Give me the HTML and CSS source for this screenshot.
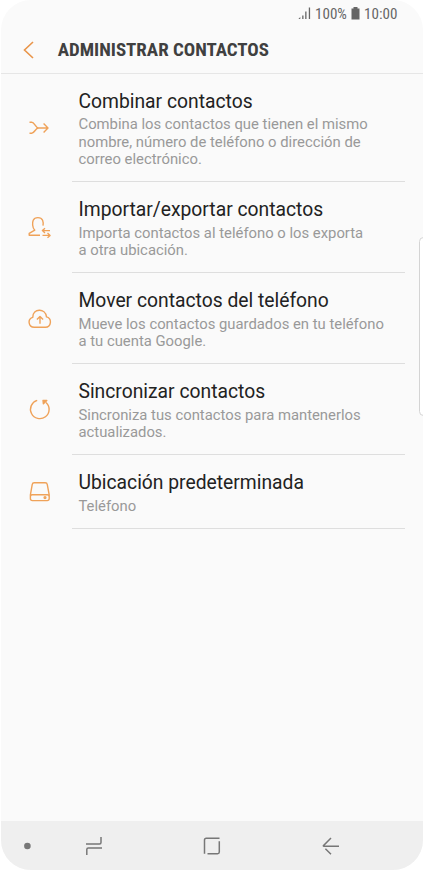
FILE: index.html
```html
<!DOCTYPE html>
<html lang="es">
<head>
    <meta charset="utf-8">
    <title>Administrar contactos</title>
    <link rel="stylesheet" href="styles.css">
</head>
<body>
    <div class="screen">
        <div class="status-bar">
            <svg class="signal" width="13" height="13" viewBox="0 0 13 13">
                <path d="M.4 12 2.3 10.1V12ZM4.2 8.4H5.5V12H4.2ZM7.2 4.5H8.5V12H7.2ZM10.8.5H12.1V12H10.8Z"/>
            </svg>
            <span class="battery-level">100%</span>
            <svg class="battery" width="9" height="13" viewBox="0 0 9 13">
                <path d="M2.5 0h4v1.5H8.5V12.5H.5V1.5h2Z"/>
            </svg>
            <span class="clock">10:00</span>
        </div>

        <div class="header">
            <svg class="back" width="12" height="18" viewBox="0 0 12 18">
                <path d="M10 1 1.5 9 10 17"/>
            </svg>
            <h1>ADMINISTRAR CONTACTOS</h1>
        </div>

        <div class="list">
            <div class="item">
                <svg class="icon" width="24" height="24" viewBox="0 0 24 24">
                    <path d="M1.5 6.2H3.7C6.8 6.2 7.1 12 10.7 12H19.8M1.5 17.2H3.7C6.8 17.2 7.1 12 10.7 12M15.6 7.6 20 12 15.6 16.4"/>
                </svg>
                <div class="item-text">
                    <h2>Combinar contactos</h2>
                    <p>Combina los contactos que tienen el mismo<br>nombre, número de teléfono o dirección de<br>correo electrónico.</p>
                </div>
            </div>
            <div class="item">
                <svg class="icon" width="24" height="24" viewBox="0 0 24 24">
                    <path d="M12 19.2H1.2V17.4L6.8 14.2C4 11.6 4.4 6.2 5.2 4.3C6.8.7 13 .7 14.6 4.3C15.3 6 15.3 7.6 15 9.6M22 14.6H14.5M17 12.3 14.4 14.6 17 16.9M14.5 19.4H22M19.5 17.1 22.1 19.4 19.5 21.7"/>
                </svg>
                <div class="item-text">
                    <h2>Importar/exportar contactos</h2>
                    <p>Importa contactos al teléfono o los exporta<br>a otra ubicación.</p>
                </div>
            </div>
            <div class="item">
                <svg class="icon" width="24" height="24" viewBox="0 0 24 24">
                    <path d="M6.2 20.3A5.1 5.1 0 0 1 4.8 10.3C4.7 1.2 17.5.6 18.5 9.9A5.3 5.3 0 0 1 17.4 20.3ZM12 16.8V9.8M8.9 12.6 12 9.5 15.1 12.6"/>
                </svg>
                <div class="item-text">
                    <h2>Mover contactos del teléfono</h2>
                    <p>Mueve los contactos guardados en tu teléfono<br>a tu cuenta Google.</p>
                </div>
            </div>
            <div class="item">
                <svg class="icon" width="24" height="24" viewBox="0 0 24 24">
                    <path d="M9.2 2.4A9.3 9.3 0 1 0 18 4.4"/>
                    <path class="filled" d="M15 2.4H18.8L15.4 5.8Z"/>
                </svg>
                <div class="item-text">
                    <h2>Sincronizar contactos</h2>
                    <p>Sincroniza tus contactos para mantenerlos<br>actualizados.</p>
                </div>
            </div>
            <div class="item">
                <svg class="icon" width="24" height="24" viewBox="0 0 24 24">
                    <path d="M6.2 2.8H17.2Q19 2.8 19.3 4.6L21.2 14.8V18.6Q21.2 20.6 19.2 20.6H4.4Q2.4 20.6 2.4 18.6V14.8L4.2 4.6Q4.5 2.8 6.2 2.8ZM2.4 16.8Q2.4 14.7 4.4 14.7H19.2Q21.2 14.7 21.2 16.8"/>
                    <circle cx="17" cy="17.6" r=".9"/>
                </svg>
                <div class="item-text">
                    <h2>Ubicación predeterminada</h2>
                    <p>Teléfono</p>
                </div>
            </div>
        </div>

        <div class="nav-bar">
            <svg width="8" height="8" viewBox="0 0 8 8">
                <circle class="dot" cx="4.4" cy="4" r="3.3"/>
            </svg>
            <svg width="18" height="20" viewBox="0 0 18 20">
                <path d="M1 8H14.5Q16 8 16 6.5V1M1.8 19V13.5Q1.8 12 3.3 12H17"/>
            </svg>
            <svg width="18" height="18" viewBox="0 0 18 18">
                <path d="M1.5 16.7V3Q1.5 1.3 3.2 1.3H16.5M16.3 4.3V15Q16.3 16.7 14.6 16.7H4.5"/>
            </svg>
            <svg width="18" height="18" viewBox="0 0 18 18">
                <path d="M9 1 1.4 8.6Q1.2 9.2 1.8 9.2H17M3.4 11.8 9 17.2"/>
            </svg>
        </div>

        <div class="edge-handle"></div>
    </div>
</body>
</html>
```
FILE: styles.css
```css
body {
    margin: 0;
    background: #fff;
    font-family: Roboto, sans-serif;
}
.screen {
    position: relative;
    display: flex;
    flex-direction: column;
    width: 422px;
    height: 870px;
    margin-left: 1px;
    overflow: hidden;
    background: #fafafa;
    border-radius: 30px;
}
svg {
    display: block;
    flex: none;
    fill: none;
}
.status-bar {
    display: flex;
    align-items: center;
    height: 27px;
    padding-left: 297px;
    color: #666;
    font-size: 15.1px;
    font-stretch: 75%;
}
.signal,
.battery {
    fill: #666;
}
.battery-level {
    width: 32px;
    margin: 0 4px;
}
.clock {
    margin-left: 4px;
}
.header {
    display: flex;
    align-items: center;
    box-sizing: border-box;
    height: 47px;
    padding-left: 21.5px;
    border-bottom: 1px solid #e6e6e6;
}
.back {
    stroke: #e9954a;
    stroke-width: 1.6;
}
.header h1 {
    margin: 0 0 0 23.2px;
    color: #404040;
    font-size: 18.95px;
    font-weight: 700;
    font-stretch: 75%;
    line-height: 22px;
    white-space: nowrap;
}
.list {
    flex: 1;
}
.item {
    display: flex;
    align-items: center;
    padding: 0 18px 0 26.6px;
}
.icon {
    margin-right: 20.4px;
    stroke: #efa259;
    stroke-width: 1.4;
    stroke-linejoin: round;
}
.filled {
    fill: #efa259;
}
.item-text {
    flex: 1;
    padding: 16px 0 12.8px 6.5px;
    border-bottom: 1px solid #dedede;
}
.item h2 {
    margin: 0 0 2.4px;
    color: #222;
    font-size: 19.3px;
    font-weight: 400;
    line-height: 24px;
}
.item p {
    margin: 0;
    color: #999;
    font-size: 14.83px;
    line-height: 17.4px;
    white-space: nowrap;
}
.nav-bar {
    display: flex;
    align-items: center;
    height: 49px;
    padding-left: 22.3px;
    background: #efefef;
    stroke: #777;
    stroke-width: 1.5;
}
.nav-bar svg:nth-child(2) {
    margin-left: 53.4px;
}
.nav-bar svg:nth-child(3) {
    margin-left: 100px;
}
.nav-bar svg:nth-child(4) {
    margin-left: 101px;
}
.dot {
    fill: #777;
    stroke: none;
}
/* edge panel handle, peeks in from the right side */
.edge-handle {
    position: absolute;
    top: 237px;
    right: -5px;
    box-sizing: border-box;
    width: 9px;
    height: 179px;
    background: #fff;
    border: 1px solid #d4d4d4;
    border-radius: 6px;
}
```
